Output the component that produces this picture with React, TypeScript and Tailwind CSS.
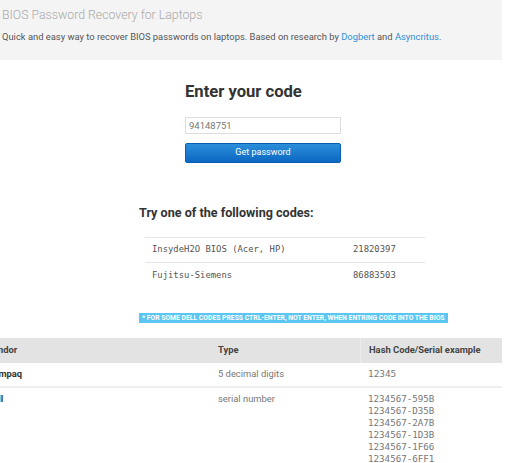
import React from "react";

const sampleCodes = [
  { vendor: "InsydeH2O BIOS (Acer, HP)", code: "21820397" },
  { vendor: "Fujitsu-Siemens", code: "86883503" },
];

const dellHashes = [
  "1234567-595B",
  "1234567-D35B",
  "1234567-2A7B",
  "1234567-1D3B",
  "1234567-1F66",
  "1234567-6FF1",
];

const mono = { fontFamily: '"DejaVu Sans Mono", "Liberation Mono", monospace' };

export default function App() {
  return (
    <div
      className="w-[521px] h-[463px] overflow-hidden bg-white"
      style={{ fontFamily: 'Roboto, "Liberation Sans", sans-serif' }}
    >
      <div className="w-[502px] overflow-hidden">
        {/* Header */}
        <header className="h-[60px] bg-[#f4f4f4] pl-[2px] pt-[6px]">
          <h1 className="text-[12.3px] font-light leading-[18px] text-[#a9a9a9]">
            BIOS Password Recovery for Laptops
          </h1>
          <p className="mt-[7px] text-[9.4px] leading-[12px] text-[#555]">
            Quick and easy way to recover BIOS passwords on laptops. Based on research by{" "}
            <a className="text-[#2b8fd6]">Dogbert</a> and{" "}
            <a className="text-[#2b8fd6]">Asyncritus</a>.
          </p>
        </header>

        {/* Code form */}
        <div className="ml-[185px] w-[156px] pt-[21px]">
          <h2 className="text-[16.6px] font-bold leading-[22px] text-[#333]">
            Enter your code
          </h2>
          <div className="mt-[14px] h-[17px] border border-[#ddd] bg-white pl-[3px] text-[9.5px] leading-[15px] text-[#777]">
            94148751
          </div>
          <button className="mt-[9px] w-full h-[20px] rounded-[2px] bg-gradient-to-b from-[#2b8fda] to-[#0b67c2] border border-[#0a5fae] text-[9px] text-white">
            Get password
          </button>
        </div>

        {/* Suggested codes */}
        <div className="pl-[139px] pt-[42px]">
          <h3 className="text-[12.6px] font-bold leading-[16px] text-[#333]">
            Try one of the following codes:
          </h3>
          <div className="mt-[16px] ml-[6px] w-[280px] border-t border-[#e5e5e5]" style={mono}>
            {sampleCodes.map((row, i) => (
              <div
                key={row.code}
                className={`flex h-[25px] items-center text-[8.9px] text-[#555] ${
                  i === 0 ? "border-b border-[#e5e5e5]" : ""
                }`}
              >
                <span className="w-[208px] pl-[7px]">{row.vendor}</span>
                <span>{row.code}</span>
              </div>
            ))}
          </div>
          <div className="mt-[25px] inline-block bg-[#5bc6f2] px-[3px] text-[6.8px] font-bold leading-[10px] text-white">
            * FOR SOME DELL CODES PRESS CTRL-ENTER, NOT ENTER, WHEN ENTRING CODE INTO THE BIOS
          </div>
        </div>

        {/* Vendor table */}
        <div className="mt-[11px] ml-[-21px] w-[523px] text-[9.4px]">
          <div className="flex h-[25px] items-center bg-[#e3e3e3] font-bold text-[#444]">
            <div className="w-[231px] pl-[8px]">Vendor</div>
            <div className="w-[150px] pl-[8px]">Type</div>
            <div className="w-[142px] h-full flex items-center pl-[8px] border-l border-[#ececec]">
              Hash Code/Serial example
            </div>
          </div>
          <div className="flex h-[25px] items-center border-b-2 border-[#eeeeee] text-[#777]">
            <div className="w-[231px] pl-[8px] font-bold text-[#333]">Compaq</div>
            <div className="w-[150px] pl-[8px]">5 decimal digits</div>
            <div className="w-[142px] pl-[8px]" style={mono}>12345</div>
          </div>
          <div className="flex pt-[5px] text-[#777]">
            <div className="w-[231px] pl-[8px] font-bold text-[#333] leading-[12px]">Dell</div>
            <div className="w-[150px] pl-[8px] leading-[12px]">serial number</div>
            <div className="w-[142px] pl-[8px] leading-[12px] text-[9.2px]" style={mono}>
              {dellHashes.map((h) => (
                <div key={h}>{h}</div>
              ))}
            </div>
          </div>
        </div>
      </div>
    </div>
  );
}
